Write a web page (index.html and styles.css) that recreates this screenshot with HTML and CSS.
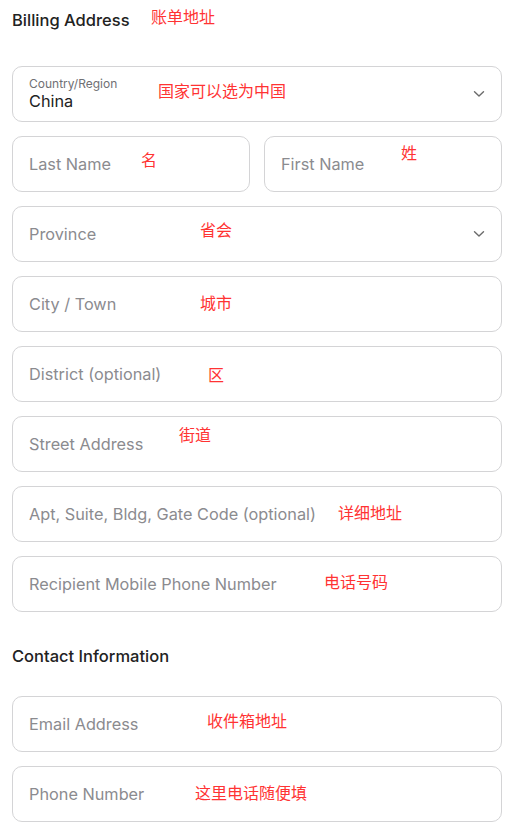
FILE: index.html
```html
<!DOCTYPE html>
<html lang="en">
<head>
<meta charset="utf-8">
<link rel="stylesheet" href="styles.css">
</head>
<body>
<form class="form">
  <h2 class="heading">Billing Address<span class="note note-title">账单地址</span></h2>
  <div class="fields">
    <div class="field field-select">
      <div class="select-text">
        <span class="small-label">Country/Region</span>
        <span class="value">China</span>
      </div>
      <svg class="chevron" width="12" height="8" viewBox="0 0 12 8"><path d="M1.5 1.8 L6 6 L10.5 1.8" fill="none" stroke="#6b6b6b" stroke-width="1.4" stroke-linecap="round" stroke-linejoin="round"/></svg>
      <span class="note" style="left:145px;top:13px">国家可以选为中国</span>
    </div>
    <div class="row">
      <div class="field"><span class="placeholder">Last Name</span><span class="note" style="left:128px;top:12px">名</span></div>
      <div class="field"><span class="placeholder">First Name</span><span class="note" style="left:136px;top:5px">姓</span></div>
    </div>
    <div class="field field-select">
      <span class="placeholder">Province</span>
      <svg class="chevron" width="12" height="8" viewBox="0 0 12 8"><path d="M1.5 1.8 L6 6 L10.5 1.8" fill="none" stroke="#6b6b6b" stroke-width="1.4" stroke-linecap="round" stroke-linejoin="round"/></svg>
      <span class="note" style="left:187px;top:12px">省会</span>
    </div>
    <div class="field"><span class="placeholder">City / Town</span><span class="note" style="left:187px;top:15px">城市</span></div>
    <div class="field"><span class="placeholder">District (optional)</span><span class="note" style="left:195px;top:17px">区</span></div>
    <div class="field"><span class="placeholder">Street Address</span><span class="note" style="left:166px;top:7px">街道</span></div>
    <div class="field"><span class="placeholder">Apt, Suite, Bldg, Gate Code (optional)</span><span class="note" style="left:325px;top:15px">详细地址</span></div>
    <div class="field"><span class="placeholder">Recipient Mobile Phone Number</span><span class="note" style="left:311px;top:14px">电话号码</span></div>
  </div>
  <h2 class="heading heading-contact">Contact Information</h2>
  <div class="fields">
    <div class="field"><span class="placeholder">Email Address</span><span class="note" style="left:194px;top:13px">收件箱地址</span></div>
    <div class="field"><span class="placeholder">Phone Number</span><span class="note" style="left:182px;top:15px">这里电话随便填</span></div>
  </div>
</form>
</body>
</html>
```

FILE: styles.css
```css
* { box-sizing: border-box; }
html, body { margin: 0; padding: 0; background: #fff; }
body {
  font-family: Inter, "Noto Sans", sans-serif;
  color: #1f1f1f;
  width: 517px;
}
.form {
  padding: 0 15px 0 12px;
}
.heading {
  position: relative;
  margin: 8px 0 34px;
  font-size: 16.5px;
  line-height: 24px;
  font-weight: 500;
  color: #222;
}
.heading-contact {
  margin: 32px 0 28px;
}
.fields {
  display: flex;
  flex-direction: column;
  gap: 14px;
}
.row {
  display: flex;
  gap: 14px;
}
.row .field { flex: 1 1 0; }
.field {
  position: relative;
  height: 56px;
  border: 1px solid #d4d4d6;
  border-radius: 10px;
  padding: 0 16px;
  display: flex;
  align-items: center;
  background: #fff;
}
.field-select { justify-content: space-between; }
.placeholder {
  font-size: 16.3px;
  color: #8b8b8f;
  white-space: nowrap;
}
.select-text {
  display: flex;
  flex-direction: column;
  padding-bottom: 2px;
}
.small-label {
  font-size: 12px;
  line-height: 15px;
  color: #707074;
}
.value {
  font-size: 16.3px;
  line-height: 20px;
  color: #222;
}
.note {
  position: absolute;
  font-family: "Noto Sans CJK SC", sans-serif;
  font-size: 16px;
  line-height: 20px;
  font-weight: 400;
  color: #ff3333;
  white-space: nowrap;
}
.note-title {
  left: 139px;
  top: -2px;
}
```
